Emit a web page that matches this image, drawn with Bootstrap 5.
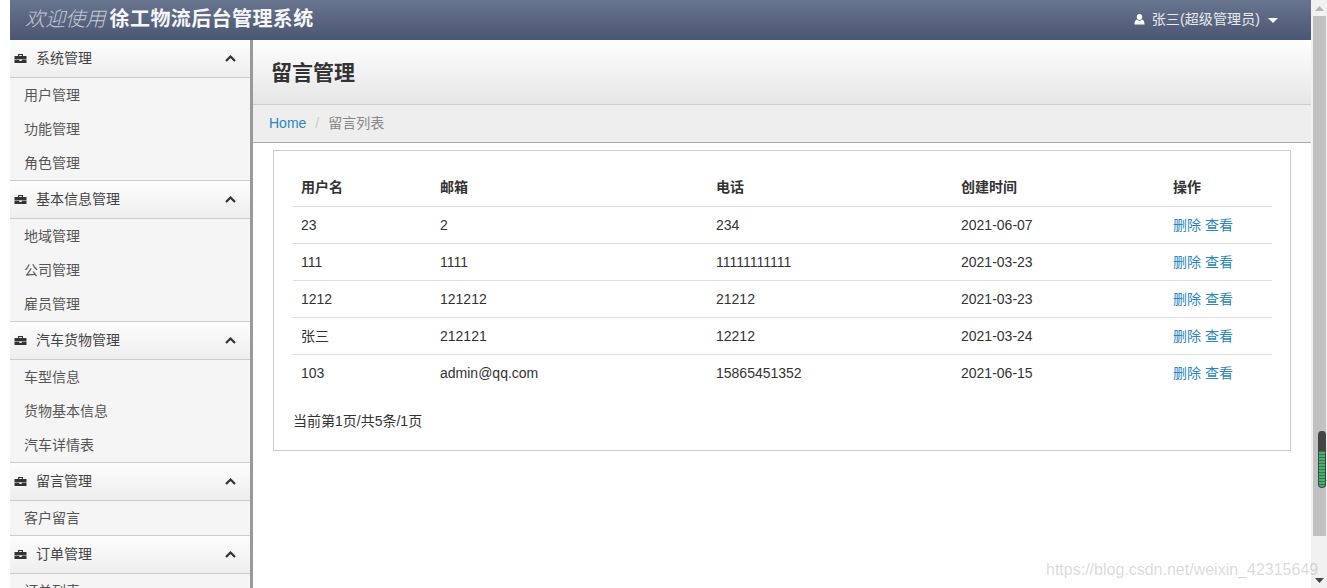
<!DOCTYPE html>
<html lang="zh">
<head>
<meta charset="utf-8">
<title>留言管理</title>
<link rel="stylesheet" href="https://cdn.jsdelivr.net/npm/bootstrap@5.3.0/dist/css/bootstrap.min.css">
<style>
html,body{height:100%;overflow:hidden}
body{background:#fff;color:#333;font-family:"Liberation Sans","Noto Sans CJK SC",sans-serif;font-size:14px}
.shell{height:588px;width:1327px;padding-left:10px;position:relative}
.mainarea{width:1301px;height:588px}
.topbar{height:40px;background:linear-gradient(#68758f,#4b5672);color:#fff;padding:0 33px 2px 15px}
.brandline{font-size:20px;font-family:"Liberation Serif","Noto Sans CJK SC",serif;letter-spacing:.15px}
.brandline em{color:#c3c9d4;font-weight:300;margin-right:4px}
.brandline strong{color:#f5f6f8;font-weight:700;letter-spacing:.4px}
.userlink{color:#e8eaef;font-size:14px;letter-spacing:.1px}
.useric{margin-right:7px}
.caretdown{border-top:5px solid #fff;border-left:5px solid transparent;border-right:5px solid transparent;margin-left:8px;margin-top:2px}
.belowbar{height:548px}
.sidepane{width:243px;background:#f5f5f5;border-right:3px solid #999;overflow:hidden;flex:none}
.grouphead{height:39px;background:linear-gradient(#fdfdfd,#eeeeee);border-top:1px solid #ccc;border-bottom:1px solid #ccc;padding:0 14px 0 4px;color:#444}
.grouphead.firsthead{height:38px;border-top:0}
.grouphead span{margin-left:9px}
.subentry{height:34px;line-height:34px;padding-left:14px;color:#555;display:block;text-decoration:none}
.contentpane{min-width:0}
.pagehead{height:65px;background:linear-gradient(#fefefe,#e6e6e6);border-bottom:1px solid #ccc;padding:2px 0 0 18px}
.pagehead h1{font-size:21px;font-weight:700;color:#333;margin:0;font-family:"Liberation Sans","Noto Sans CJK SC",sans-serif}
.crumbbar{height:38px;background:#eee;border-bottom:1px solid #aaa;padding-left:16px;margin:0}
.crumbbar a{color:#2a87bb;text-decoration:none}
.crumbsep{color:#ccc;margin:0 9px}
.crumbnow{color:#888}
.panelbox{margin:7px 20px 0 20px;height:301px;border:1px solid #ccc;padding:18px 19px 0}
.datatable{width:979px;table-layout:fixed;margin:0;color:#333}
.datatable th,.datatable td{padding:1px 8px 0;height:37px;vertical-align:middle;border-bottom:1px solid #ddd;background:transparent}
.datatable tr:last-child td{border-bottom:0}
.datatable th{font-weight:700}
.datatable a{color:#2a87bb;text-decoration:none}
.cw1{width:139px}.cw2{width:276px}.cw3{width:245px}.cw4{width:212px}
.pagertext{margin-top:20px;line-height:20px}
.fakescroll{width:16px;height:588px;background:#f1f1f1;flex:none}
.arrowbtn{height:16px;display:flex;align-items:center;justify-content:center}
.scrolltrack{height:520px;margin-left:2px;width:13px;background:#c1c1c1;padding-top:415px;padding-left:5px}
.scrollpill{width:8px;height:57px;border-radius:4px;background:linear-gradient(#444 0 20px,transparent 20px),repeating-linear-gradient(#4caf6e 0 2px,#2b7d4a 2px 3px);border:1px solid #444;border-top:0}
.scrollrest{flex:1}
.markwater{position:absolute;left:1046px;top:558px;font-size:16px;color:rgba(120,120,120,.28);white-space:nowrap;line-height:24px}
</style>
</head>
<body>
<div class="shell d-flex">
  <div class="mainarea d-flex flex-column">
    <header class="topbar d-flex align-items-center justify-content-between">
      <div class="brandline"><em>欢迎使用</em><strong>徐工物流后台管理系统</strong></div>
      <div class="userlink d-flex align-items-center">
        <svg class="useric" width="11" height="11" viewBox="0 0 12 12"><path d="M6 0C4.200 0 3 1.300 3 3.300 3 5 4 6.500 6 6.500S9 5 9 3.300C9 1.300 7.800 0 6 0zM3.500 6C1.500 6.500.5 8 .5 11.500h11C11.500 8 10.500 6.500 8.500 6 7.800 7 7 7.500 6 7.500S4.200 7 3.500 6z" fill="#fff"/></svg>
        <span>张三(超级管理员)</span><i class="caretdown d-inline-block"></i>
      </div>
    </header>
    <div class="belowbar d-flex">
      <nav class="sidepane">
        <div class="grouphead firsthead d-flex align-items-center justify-content-between"><div class="d-flex align-items-center"><svg width="13" height="9" viewBox="0 0 12 9"><path d="M3.500 0h5v2H12v3.200H0V2h3.500zM4.700 1v1h2.600V1zM0 5.800h4.800V7h2.400V5.800H12V9H0z" fill="#333" fill-rule="evenodd"/></svg><span>系统管理</span></div><svg width="11" height="7" viewBox="0 0 11 7"><path d="M1 6l4.500-4.500L10 6" fill="none" stroke="#333" stroke-width="2.200"/></svg></div>
        <a class="subentry" href="#">用户管理</a><a class="subentry" href="#">功能管理</a><a class="subentry" href="#">角色管理</a>
        <div class="grouphead d-flex align-items-center justify-content-between"><div class="d-flex align-items-center"><svg width="13" height="9" viewBox="0 0 12 9"><path d="M3.500 0h5v2H12v3.200H0V2h3.500zM4.700 1v1h2.600V1zM0 5.800h4.800V7h2.400V5.800H12V9H0z" fill="#333" fill-rule="evenodd"/></svg><span>基本信息管理</span></div><svg width="11" height="7" viewBox="0 0 11 7"><path d="M1 6l4.500-4.500L10 6" fill="none" stroke="#333" stroke-width="2.200"/></svg></div>
        <a class="subentry" href="#">地域管理</a><a class="subentry" href="#">公司管理</a><a class="subentry" href="#">雇员管理</a>
        <div class="grouphead d-flex align-items-center justify-content-between"><div class="d-flex align-items-center"><svg width="13" height="9" viewBox="0 0 12 9"><path d="M3.500 0h5v2H12v3.200H0V2h3.500zM4.700 1v1h2.600V1zM0 5.800h4.800V7h2.400V5.800H12V9H0z" fill="#333" fill-rule="evenodd"/></svg><span>汽车货物管理</span></div><svg width="11" height="7" viewBox="0 0 11 7"><path d="M1 6l4.500-4.500L10 6" fill="none" stroke="#333" stroke-width="2.200"/></svg></div>
        <a class="subentry" href="#">车型信息</a><a class="subentry" href="#">货物基本信息</a><a class="subentry" href="#">汽车详情表</a>
        <div class="grouphead d-flex align-items-center justify-content-between"><div class="d-flex align-items-center"><svg width="13" height="9" viewBox="0 0 12 9"><path d="M3.500 0h5v2H12v3.200H0V2h3.500zM4.700 1v1h2.600V1zM0 5.800h4.800V7h2.400V5.800H12V9H0z" fill="#333" fill-rule="evenodd"/></svg><span>留言管理</span></div><svg width="11" height="7" viewBox="0 0 11 7"><path d="M1 6l4.500-4.500L10 6" fill="none" stroke="#333" stroke-width="2.200"/></svg></div>
        <a class="subentry" href="#">客户留言</a>
        <div class="grouphead d-flex align-items-center justify-content-between"><div class="d-flex align-items-center"><svg width="13" height="9" viewBox="0 0 12 9"><path d="M3.500 0h5v2H12v3.200H0V2h3.500zM4.700 1v1h2.600V1zM0 5.800h4.800V7h2.400V5.800H12V9H0z" fill="#333" fill-rule="evenodd"/></svg><span>订单管理</span></div><svg width="11" height="7" viewBox="0 0 11 7"><path d="M1 6l4.500-4.500L10 6" fill="none" stroke="#333" stroke-width="2.200"/></svg></div>
        <a class="subentry" href="#">订单列表</a>
      </nav>
      <main class="contentpane flex-grow-1">
        <div class="pagehead d-flex align-items-center"><h1>留言管理</h1></div>
        <div class="crumbbar d-flex align-items-center"><a href="#">Home</a><span class="crumbsep">/</span><span class="crumbnow">留言列表</span></div>
        <div class="panelbox">
          <table class="table datatable">
            <colgroup><col class="cw1"><col class="cw2"><col class="cw3"><col class="cw4"><col></colgroup>
            <thead><tr><th>用户名</th><th>邮箱</th><th>电话</th><th>创建时间</th><th>操作</th></tr></thead>
            <tbody>
              <tr><td>23</td><td>2</td><td>234</td><td>2021-06-07</td><td><a href="#">删除</a> <a href="#">查看</a></td></tr>
              <tr><td>111</td><td>1111</td><td>11111111111</td><td>2021-03-23</td><td><a href="#">删除</a> <a href="#">查看</a></td></tr>
              <tr><td>1212</td><td>121212</td><td>21212</td><td>2021-03-23</td><td><a href="#">删除</a> <a href="#">查看</a></td></tr>
              <tr><td>张三</td><td>212121</td><td>12212</td><td>2021-03-24</td><td><a href="#">删除</a> <a href="#">查看</a></td></tr>
              <tr><td>103</td><td>admin@qq.com</td><td>15865451352</td><td>2021-06-15</td><td><a href="#">删除</a> <a href="#">查看</a></td></tr>
            </tbody>
          </table>
          <div class="pagertext">当前第1页/共5条/1页</div>
        </div>
      </main>
    </div>
  </div>
  <div class="fakescroll d-flex flex-column">
    <div class="arrowbtn"><svg width="9" height="5" viewBox="0 0 9 5"><path d="M0 5l4.500-5L9 5z" fill="#b5b5b5"/></svg></div>
    <div class="scrolltrack"><div class="scrollpill"></div></div>
    <div class="scrollrest"></div>
    <div class="arrowbtn"><svg width="9" height="5" viewBox="0 0 9 5"><path d="M0 0h9L4.500 5z" fill="#444"/></svg></div>
  </div>
  <div class="markwater">https://blog.csdn.net/weixin_42315649</div>
</div>
<script src="https://cdn.jsdelivr.net/npm/bootstrap@5.3.0/dist/js/bootstrap.bundle.min.js"></script>
</body>
</html>
